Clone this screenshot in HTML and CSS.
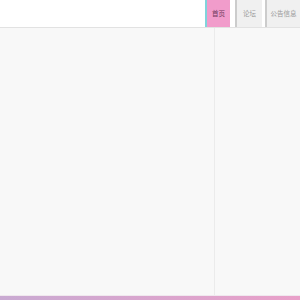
FILE: index.html
```html
<!DOCTYPE html>
<html lang="zh">
<head>
  <meta charset="UTF-8">
  <title>首页</title>
  <link rel="stylesheet" href="styles.css">
</head>
<body>
  <div class="header">
    <ul class="nav">
      <li class="tab active">首页</li>
      <li class="tab forum">论坛</li>
      <li class="tab notice">公告信息</li>
    </ul>
  </div>

  <div class="main">
    <div class="content"></div>
    <div class="sidebar"></div>
  </div>

  <div class="footer"></div>
</body>
</html>
```

FILE: styles.css
```css
body {
  margin: 0;
  font-family: "Noto Sans CJK SC", "Liberation Sans", sans-serif;
  background: #f8f8f8;
  height: 300px;
  display: flex;
  flex-direction: column;
  overflow: hidden;
}

.header {
  height: 27px;
  background: #fff;
  border-bottom: 1px solid #e2e2e2;
  display: flex;
  justify-content: flex-end;
  flex-shrink: 0;
}

.nav {
  list-style: none;
  margin: 0;
  padding: 0;
  display: flex;
}

.tab {
  height: 27px;
  line-height: 27px;
  font-size: 6.5px;
  text-align: center;
  color: #9a9a9a;
  background: #f0f0f0;
  border-left: 2px solid #cccccc;
  white-space: nowrap;
}

.tab.active {
  width: 23px;
  background: #f19ccb;
  border-left-color: #80d4dc;
  color: #6e3a5c;
}

.tab.forum {
  width: 25px;
  margin-left: 5px;
}

.tab.notice {
  width: 33px;
  margin-left: 3px;
}

.main {
  flex: 1;
  display: flex;
}

.content {
  width: 214px;
  border-right: 1px solid #ebebeb;
}

.sidebar {
  flex: 1;
}

.footer {
  height: 4px;
  flex-shrink: 0;
  border-top: 1px solid #f0e8ee;
  background: linear-gradient(to right, #c9aad2, #e9a0c9);
}
```
